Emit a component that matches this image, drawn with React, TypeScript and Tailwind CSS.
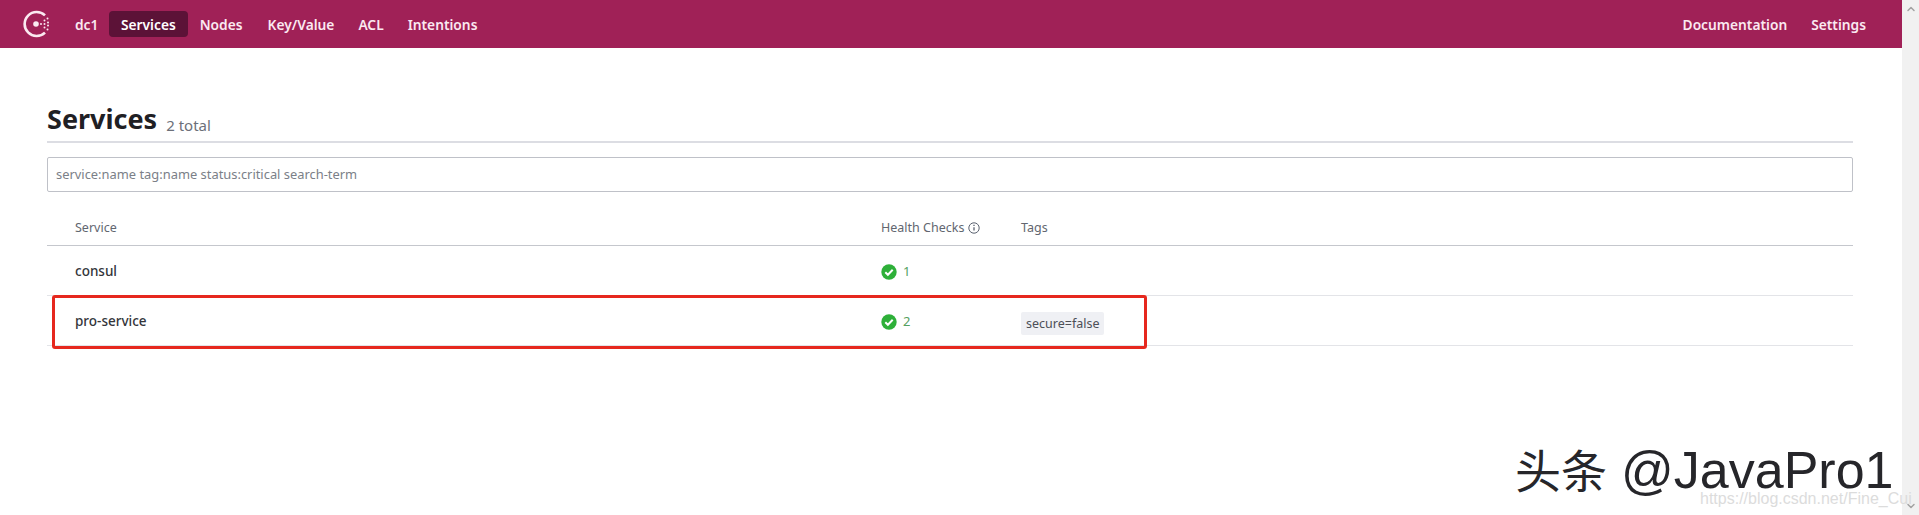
import { ChevronDown, ChevronUp } from "lucide-react";

const font = { fontFamily: '"Noto Sans", "Noto Sans CJK SC", sans-serif' };

function ConsulLogo() {
  return (
    <svg width="28" height="28" viewBox="0 0 28 28" fill="#fbe9f1">
      <path d="M22 5.4A12 12 0 1 0 22 22.6" fill="none" stroke="#fbe9f1" strokeWidth="2.6" />
      <circle cx="13" cy="14" r="2.8" />
      <circle cx="18" cy="14" r="1" />
      <circle cx="21.5" cy="10.5" r="1" />
      <circle cx="24.5" cy="8.5" r="1" />
      <circle cx="21.5" cy="14" r="1" />
      <circle cx="25" cy="12.5" r="1" />
      <circle cx="25" cy="15.5" r="1" />
      <circle cx="21.5" cy="17.5" r="1" />
      <circle cx="24.5" cy="19.5" r="1" />
    </svg>
  );
}

function CheckIcon() {
  return (
    <svg width="16" height="16" viewBox="0 0 16 16">
      <circle cx="8" cy="8" r="7.7" fill="#2eb039" />
      <path d="M4.3 8.2l2.6 2.6 4.8-5" fill="none" stroke="#fff" strokeWidth="2" />
    </svg>
  );
}

function InfoIcon() {
  return (
    <svg width="12" height="12" viewBox="0 0 12 12" fill="none" stroke="#5b6270">
      <circle cx="6" cy="6" r="5.2" />
      <path d="M6 5.2v3.4" strokeWidth="1.3" />
      <path d="M6 2.8v1.3" strokeWidth="1.3" />
    </svg>
  );
}

const rows = [
  { name: "consul", checks: 1, tag: "" },
  { name: "pro-service", checks: 2, tag: "secure=false" },
];

export default function App() {
  return (
    <div className="relative flex h-[515px] overflow-hidden bg-white" style={font}>
      <div className="min-w-0 flex-1">
        <header className="flex h-[48px] items-center justify-between bg-[#a02157] pl-[23px] pr-[36px] text-[13.75px] font-semibold text-[#fbe9f1]">
          <div className="flex items-center">
            <ConsulLogo />
            <span className="ml-[24px] w-[22px] pt-[2px]">dc1</span>
            <span className="ml-[12px] rounded-[4px] bg-[#5c1237] px-[12px] pt-[4px] pb-[2px] text-white">Services</span>
            <span className="ml-[12px] pt-[2px]">Nodes</span>
            <span className="ml-[25px] pt-[2px]">Key/Value</span>
            <span className="ml-[24px] pt-[2px]">ACL</span>
            <span className="ml-[24px] pt-[2px]">Intentions</span>
          </div>
          <div className="flex items-center gap-[24px] pt-[2px]">
            <span>Documentation</span>
            <span>Settings</span>
          </div>
        </header>

        <main className="pl-[47px] pr-[49px]">
          <div className="mt-[49px] flex h-[46px] items-end border-b-2 border-[#dcdde3] pb-[2px]">
            <h1 className="text-[27px] leading-[40px] font-bold text-[#1f2024]">Services</h1>
            <span className="mb-[2px] ml-[9px] text-[15px] leading-[24px] text-[#6c7079]">2 total</span>
          </div>

          <div className="mt-[14px] flex h-[35px] items-center rounded-[2px] border border-[#bfc1c8] pt-[1px] pl-[8px] text-[12.9px] text-[#7b7f88]">
            service:name tag:name status:critical search-term
          </div>

          <div className="mt-[19px] grid h-[35px] grid-cols-[834px_140px_1fr] items-center border-b border-[#c5c7cd] text-[12.5px] text-[#62666f]">
            <span className="pl-[28px]">Service</span>
            <span className="flex items-center gap-[4px]">
              Health Checks <InfoIcon />
            </span>
            <span>Tags</span>
          </div>

          {rows.map((row) => (
            <div
              key={row.name}
              className="grid h-[50px] grid-cols-[834px_140px_1fr] items-center border-b border-[#e3e4e8] pt-[2px]"
            >
              <span className="pl-[28px] text-[13.5px] font-medium text-[#33353a]">{row.name}</span>
              <span className="flex items-center gap-[6px] text-[13px] text-[#55a060]">
                <CheckIcon />
                {row.checks}
              </span>
              <span>
                {row.tag && (
                  <span className="rounded-[2px] bg-[#eff0f4] px-[5px] py-[3px] text-[12.5px] text-[#4c4f57]">
                    {row.tag}
                  </span>
                )}
              </span>
            </div>
          ))}
        </main>
      </div>

      <div className="flex w-[17px] shrink-0 flex-col items-center justify-between bg-[#f1f1f1] text-[#a3a3a3]">
        <ChevronUp size={12} strokeWidth={3} className="mt-[3px]" />
        <ChevronDown size={12} strokeWidth={3} className="mb-[3px]" />
      </div>

      <div className="absolute top-[295px] left-[52px] h-[54px] w-[1095px] rounded-[3px] border-[3px] border-[#e6281e]" />

      <div className="absolute top-[446px] left-[1515px] flex items-baseline gap-[14px] leading-[44px] whitespace-nowrap text-[#26262a]">
        <span className="text-[46px]" style={{ fontFamily: '"Noto Sans CJK SC", sans-serif' }}>头条</span>
        <span className="text-[52px]" style={{ fontFamily: '"Liberation Sans", sans-serif' }}>@JavaPro1</span>
      </div>
      <div className="absolute top-[490px] left-[1700px] text-[16px] leading-[18px] whitespace-nowrap text-[#dcdcdc]" style={{ fontFamily: '"Liberation Sans", sans-serif' }}>
        https://blog.csdn.net/Fine_Cui
      </div>
    </div>
  );
}
